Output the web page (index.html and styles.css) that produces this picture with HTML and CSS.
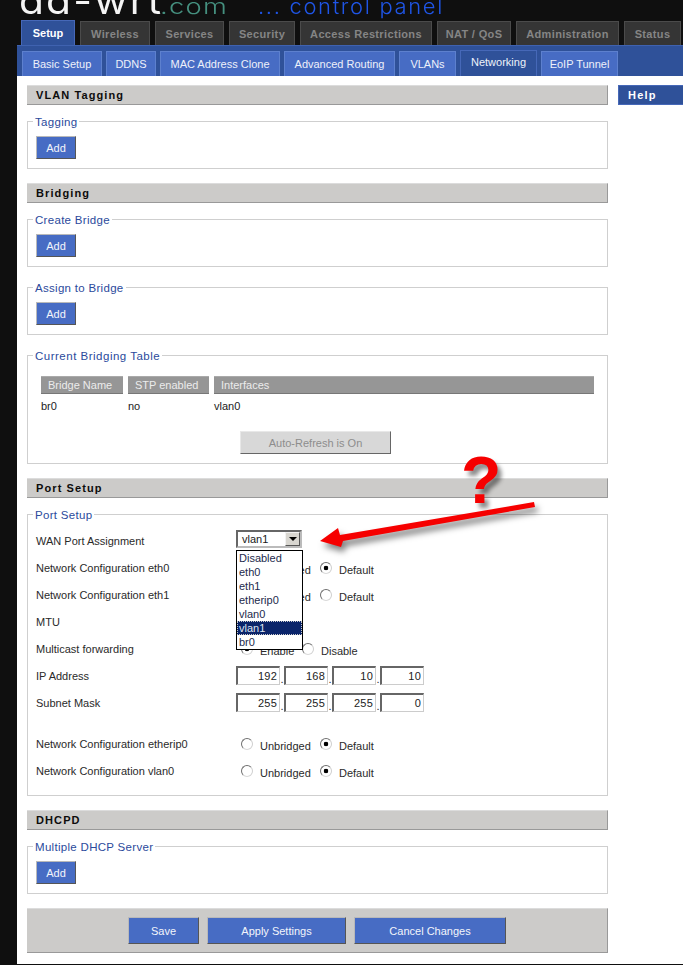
FILE: index.html
```html
<!DOCTYPE html>
<html lang="en">
<head>
<meta charset="utf-8">
<title>DD-WRT control panel</title>
<link rel="stylesheet" href="styles.css">
</head>
<body>
<header class="masthead">
  <div class="logo"><span class="logo-dd">dd-wrt</span><span class="logo-com">.com</span><span class="logo-cp">... control panel</span></div>
  <nav class="tabs">
    <a class="tab active">Setup</a><a class="tab">Wireless</a><a class="tab">Services</a><a class="tab">Security</a><a class="tab">Access Restrictions</a><a class="tab">NAT / QoS</a><a class="tab">Administration</a><a class="tab">Status</a>
  </nav>
</header>
<nav class="subtabs">
  <a class="subtab">Basic Setup</a><a class="subtab">DDNS</a><a class="subtab">MAC Address Clone</a><a class="subtab">Advanced Routing</a><a class="subtab">VLANs</a><a class="subtab current">Networking</a><a class="subtab">EoIP Tunnel</a>
</nav>
<div class="content">
  <main class="main">
    <h2 class="bar">VLAN Tagging</h2>
    <fieldset class="fs"><legend>Tagging</legend><button class="btn add">Add</button></fieldset>

    <h2 class="bar">Bridging</h2>
    <fieldset class="fs"><legend>Create Bridge</legend><button class="btn add">Add</button></fieldset>
    <fieldset class="fs next"><legend>Assign to Bridge</legend><button class="btn add">Add</button></fieldset>
    <fieldset class="fs next bridging"><legend>Current Bridging Table</legend>
      <div class="thead"><span>Bridge Name</span><span>STP enabled</span><span>Interfaces</span></div>
      <div class="trow"><span>br0</span><span>no</span><span>vlan0</span></div>
      <div class="refresh-row"><button class="refresh">Auto-Refresh is On</button></div>
    </fieldset>

    <h2 class="bar">Port Setup</h2>
    <fieldset class="fs port"><legend>Port Setup</legend>
      <div class="row"><span class="lbl">WAN Port Assignment</span>
        <div class="select"><span class="sel-val">vlan1</span><span class="sel-btn"><i class="caret"></i></span>
          <ul class="drop"><li>Disabled</li><li>eth0</li><li>eth1</li><li>etherip0</li><li>vlan0</li><li class="sel">vlan1</li><li>br0</li></ul>
        </div>
      </div>
      <div class="row"><span class="lbl">Network Configuration eth0</span><div class="opts"><input class="radio" type="radio" name="a"><span class="o1">Unbridged</span><input class="radio" type="radio" name="a" checked><span>Default</span></div></div>
      <div class="row"><span class="lbl">Network Configuration eth1</span><div class="opts"><input class="radio" type="radio" name="b"><span class="o1">Unbridged</span><input class="radio" type="radio" name="b"><span>Default</span></div></div>
      <div class="row"><span class="lbl">MTU</span></div>
      <div class="row"><span class="lbl">Multicast forwarding</span><div class="opts tight"><input class="radio" type="radio" name="c" checked><span class="o2">Enable</span><input class="radio" type="radio" name="c"><span>Disable</span></div></div>
      <div class="row"><span class="lbl">IP Address</span><div class="ip"><input class="oct" value="192"><i>.</i><input class="oct" value="168"><i>.</i><input class="oct" value="10"><i>.</i><input class="oct" value="10"></div></div>
      <div class="row"><span class="lbl">Subnet Mask</span><div class="ip"><input class="oct" value="255"><i>.</i><input class="oct" value="255"><i>.</i><input class="oct" value="255"><i>.</i><input class="oct" value="0"></div></div>
      <div class="row gap"><span class="lbl">Network Configuration etherip0</span><div class="opts"><input class="radio" type="radio" name="d"><span class="o1">Unbridged</span><input class="radio" type="radio" name="d" checked><span>Default</span></div></div>
      <div class="row"><span class="lbl">Network Configuration vlan0</span><div class="opts"><input class="radio" type="radio" name="e"><span class="o1">Unbridged</span><input class="radio" type="radio" name="e" checked><span>Default</span></div></div>
    </fieldset>

    <h2 class="bar">DHCPD</h2>
    <fieldset class="fs"><legend>Multiple DHCP Server</legend><button class="btn add">Add</button></fieldset>

    <div class="actions"><button class="btn save">Save</button><button class="btn apply">Apply Settings</button><button class="btn cancel">Cancel Changes</button></div>
  </main>
  <aside class="help"><h2 class="help-bar">Help</h2></aside>
</div>
<div class="qmark">?</div>
<svg class="arrow" width="240" height="70" viewBox="0 0 240 70" aria-hidden="true"><path d="M10 60 L28 47 L30 54 L224 21 L225 26 L33 60 L31 66 Z" fill="#f60000"/></svg>
</body>
</html>
```
FILE: styles.css
```css
* { box-sizing: border-box; }
html, body { margin: 0; padding: 0; }
body {
  position: relative;
  width: 683px;
  height: 965px;
  overflow: hidden;
  background: #0f0f0f;
  font-family: "Liberation Sans", Arial, sans-serif;
  font-size: 11px;
  color: #222;
}
.masthead { height: 45px; position: relative; overflow: hidden; }
.logo {
  height: 20px;
  position: relative;
  overflow: hidden;
  font-family: "Inter", "Liberation Sans", sans-serif;
  white-space: nowrap;
}
.logo span { position: absolute; line-height: 1; transform-origin: 0 0; }
.logo-dd { left: 19px; top: -18px; font-size: 37px; font-weight: 400; color: #f4f4f4; letter-spacing: 2px; transform: scaleX(1.1); }
.logo-com { left: 160px; top: -4px; font-size: 21px; font-weight: 300; color: #45907f; letter-spacing: 1px; transform: scaleX(1.3); }
.logo-cp { left: 258px; top: -4px; font-size: 21px; font-weight: 300; color: #1f55e6; letter-spacing: 1.6px; transform: scaleX(1.045); }
.tabs {
  display: grid;
  grid-template-columns: 54px 70px 69px 66px 132px 74px 103px 57px;
  column-gap: 5px;
  align-items: end;
  height: 25px;
  padding-left: 21px;
}
.tab {
  height: 24px;
  display: flex;
  align-items: center;
  justify-content: center;
  background: #353535;
  border: 1px solid #4b4b4b;
  border-bottom: 0;
  color: #858585;
  font-weight: 700;
  font-size: 11px;
  letter-spacing: .35px;
  white-space: nowrap;
}
.tab.active {
  height: 25px;
  background: #2f5199;
  border-color: #4668b8;
  color: #fff;
  letter-spacing: 0;
  padding-bottom: 1px;
}
.subtabs {
  display: grid;
  grid-template-columns: 80px 50px 120px 111px 57px 77px 77px;
  column-gap: 4px;
  align-items: end;
  height: 31px;
  margin-left: 17px;
  padding-left: 5px;
  background: #2f5199;
  border-top: 1px solid #3f62b0;
}
.subtab {
  height: 25px;
  display: flex;
  align-items: center;
  justify-content: center;
  background: #476cc4;
  border: 1px solid #5d80ce;
  border-bottom: 0;
  color: #eef1fa;
  font-size: 11px;
  white-space: nowrap;
}
.subtab.current {
  height: 26px;
  background: #2f5199;
  border-color: #4668b8;
  padding-bottom: 3px;
}
.content {
  display: grid;
  grid-template-columns: 581px 65px;
  column-gap: 10px;
  margin-left: 17px;
  height: 888px;
  padding: 9px 0 0 10px;
  background: #fff;
}
.bar {
  height: 20px;
  margin: 0;
  padding: 0 0 0 9px;
  background: #cccbc9;
  border-top: 1px solid #dcdcdc;
  border-bottom: 1px solid #999;
  border-right: 1px solid #999;
  color: #0c0c0c;
  font-size: 11px;
  font-weight: 700;
  line-height: 18px;
  letter-spacing: 1.1px;
}
.fs {
  margin: 9px 0 14px;
  padding: 8px 8px 9px;
  border: 1px solid #cfcfcf;
  min-width: 0;
}
.fs.next { margin-top: -1px; }
.fs legend {
  position: relative;
  top: 1px;
  margin-left: -3px;
  padding: 0 2px;
  color: #2b4a9c;
  font-size: 11.5px;
  line-height: 14px;
  letter-spacing: .3px;
  font-weight: 400;
}
.fs.bridging legend { margin-left: -8px; letter-spacing: .5px; }
.btn {
  display: block;
  font: inherit;
  color: #f3f5fb;
  background: #476cc4;
  border: 1px solid;
  border-color: #b9b9b9 #555 #555 #b9b9b9;
  padding: 0;
}
.add { width: 40px; height: 23px; }
.bridging { padding: 14px 13px 9px; }
.thead, .trow {
  display: grid;
  grid-template-columns: 82px 81px 380px;
  column-gap: 5px;
}
.thead span {
  height: 18px;
  line-height: 17px;
  padding-left: 7px;
  background: #969696;
  color: #ececec;
  border-top: 1px solid #aaa;
  border-bottom: 1px solid #777;
}
.trow { margin-top: 5px; line-height: 14px; color: #222; }
.refresh-row { margin: 18px 0 0 199px; }
.refresh {
  display: block;
  width: 151px;
  height: 23px;
  font: inherit;
  padding: 0;
  color: #8d8d8d;
  background: #d8d8d8;
  border: 1px solid;
  border-color: #e8e8e8 #666 #666 #e8e8e8;
}
.port { padding: 6px 8px 11px; }
.row {
  position: relative;
  display: grid;
  grid-template-columns: 200px 1fr;
  align-items: center;
  height: 27px;
  color: #2a2a2a;
}
.row.gap { margin-top: 14px; }
.opts { display: flex; align-items: center; }
.radio {
  appearance: none;
  width: 12px;
  height: 12px;
  margin: 0 0 0 5px;
  border-radius: 50%;
  border: 1px solid;
  border-color: #6f6f6f #cfcfcf #d8d8d8 #6f6f6f;
  background: #fff;
  flex: none;
}
.radio:checked { background: radial-gradient(circle, #000 0 2px, #fff 2.6px); }
.o1 { margin: 4px 6px 0 7px; width: 49px; white-space: nowrap; }
.opts > span:last-child { margin: 4px 0 0 7px; }
.tight .o2 { margin: 4px 3px 0 7px; width: 34px; }
.ip { display: flex; align-items: center; }
.ip i { width: 4px; font-style: normal; text-align: center; margin-top: 6px; }
.oct {
  width: 44px;
  height: 19px;
  padding: 0 2px 0 0;
  font: inherit;
  letter-spacing: .2px;
  text-align: right;
  color: #222;
  background: #fff;
  border: 1px solid;
  border-width: 2px 1px 1px 2px;
  border-color: #666 #ccc #ccc #666;
  outline: 0;
}
.select {
  position: relative;
  width: 66px;
  height: 18px;
  margin-top: -4px;
  display: flex;
  align-items: center;
  justify-content: space-between;
  padding: 0 2px 0 4px;
  border: 2px solid;
  border-color: #666 #bbb #bbb #666;
  color: #1a1a1a;
}
.sel-btn {
  width: 15px;
  height: 14px;
  display: flex;
  align-items: center;
  justify-content: center;
  background: #d8d6d0;
  border: 1px solid;
  border-color: #f2f2f2 #555 #555 #f2f2f2;
  margin-right: -2px;
}
.caret {
  width: 0;
  height: 0;
  border: 4px solid transparent;
  border-top: 4px solid #000;
  border-bottom: 0;
}
.drop {
  position: absolute;
  z-index: 2;
  left: -2px;
  top: 18px;
  width: 67px;
  height: 100px;
  margin: 0;
  padding: 0;
  list-style: none;
  background: #fff;
  border: 1px solid #000;
}
.drop li { height: 14px; line-height: 14px; padding-left: 2px; color: #1d2a4c; }
.drop li.sel { background: #0a246a; color: #dfe4f3; outline: 1px dotted #ccc; outline-offset: -1px; }
.actions {
  display: flex;
  justify-content: flex-start;
  gap: 8px;
  height: 45px;
  padding: 8px 0 0 101px;
  background: #cccbc9;
  border-top: 1px solid #dcdcdc;
  border-bottom: 1px solid #999;
  border-right: 1px solid #999;
}
.actions .btn { height: 27px; }
.save { width: 71px; }
.apply { width: 139px; }
.cancel { width: 152px; }
.help-bar {
  height: 20px;
  margin: 0;
  padding-left: 9px;
  background: #2f5199;
  border: 1px solid #4668b8;
  border-right: 0;
  color: #fff;
  font-size: 11px;
  line-height: 18px;
  letter-spacing: 1.25px;
}
.qmark {
  position: absolute;
  left: 461px;
  top: 447px;
  font-family: "Liberation Sans", Arial, sans-serif;
  font-size: 66px;
  line-height: 66px;
  font-weight: 700;
  color: #f60000;
  text-shadow: 4px 5px 4px rgba(0,0,0,.45);
}
.arrow {
  position: absolute;
  left: 310px;
  top: 481px;
  filter: drop-shadow(3px 5px 3px rgba(0,0,0,.5));
}
```
